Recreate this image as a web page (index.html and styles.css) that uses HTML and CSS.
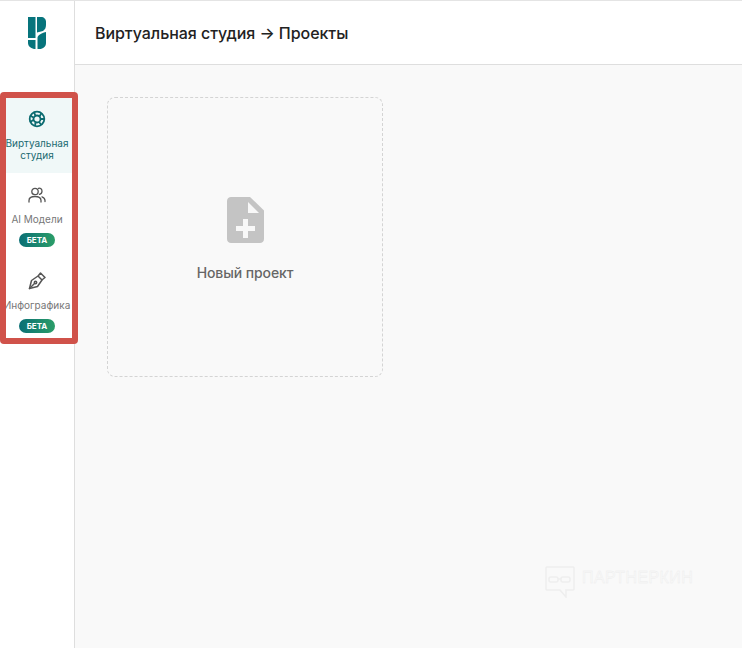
FILE: index.html
```html
<!DOCTYPE html>
<html lang="ru">
<head>
  <meta charset="UTF-8" />
  <title>Виртуальная студия</title>
  <link rel="stylesheet" href="styles.css">
</head>
<body>
  <div class="app">
    <aside class="sidebar">
      <div class="logo">
        <svg width="18" height="32" viewBox="0 0 18 32">
          <path fill="#07747c" d="M0 0H7.500V21H0Z"/>
          <path fill="#07747c" d="M9 0H13C16 0 18 2 18 5V8C18 10.500 17 12.500 15 14L9 15.500Z"/>
          <path fill="#07747c" d="M9.500 32V21C9.500 18.500 12 16.500 18 15V26C18 29.500 15 32 11.500 32Z"/>
          <path fill="#07747c" d="M0 23H7.500V32C3.500 32 0 29.500 0 26Z"/>
        </svg>
      </div>
      <nav class="menu">
        <a class="menu-item active">
          <svg class="menu-icon" width="18" height="18" viewBox="0 0 18 18" fill="none" stroke="#0b6b70" stroke-width="1.800">
            <circle cx="9" cy="9" r="7.300"/>
            <circle cx="9" cy="9" r="3.500"/>
            <path d="M6 2 7.500 6M13.500 3 11.500 6.500M16.500 9H12.500M13.500 15 11 12M7 16 7.500 12.500M2 12 5.500 10M2 5.500 5.500 7.500"/>
          </svg>
          <span class="menu-label">Виртуальная студия</span>
        </a>
        <a class="menu-item models">
          <svg class="menu-icon" width="18" height="18" viewBox="0 0 18 18" fill="none" stroke="#555" stroke-width="1.300" stroke-linecap="round">
            <circle cx="7" cy="5.500" r="3.200"/>
            <path d="M1 16V14.500C1 12 3.500 10.500 7 10.500S13 12 13 14.500V16"/>
            <path d="M10.500 2.300C12.500 1.800 14 3.300 14 5.200S12.800 8 11.500 8.300"/>
            <path d="M14 10.800C16 11.500 17 12.800 17 14.500V15.500"/>
          </svg>
          <span class="menu-label">AI Модели</span>
          <span class="badge">БЕТА</span>
        </a>
        <a class="menu-item infographic">
          <svg class="menu-icon" width="18" height="18" viewBox="0 0 18 18" fill="none" stroke="#555" stroke-width="1.500" stroke-linejoin="round" stroke-linecap="round">
            <path d="M3.500 8.500 10 4 14 8 9.500 14.500 1.500 16.500Z"/>
            <path d="M10.500 3.500 12.500 1 17 5.500 14.500 7.500"/>
            <path d="M1.500 16.500 6.500 11.500"/>
            <circle cx="7.500" cy="10.500" r="1.200"/>
          </svg>
          <span class="menu-label">Инфографика</span>
          <span class="badge">БЕТА</span>
        </a>
      </nav>
    </aside>
    <div class="content">
      <header class="topbar">
        <h1 class="title">Виртуальная студия → Проекты</h1>
      </header>
      <main class="projects">
        <div class="new-card">
          <svg width="37" height="46" viewBox="0 0 37 46">
            <path fill="#c4c4c4" d="M4 0H23L37 13.500V42C37 44.500 35 46 33 46H4C2 46 0 44.500 0 42V4C0 1.500 2 0 4 0Z"/>
            <path fill="#f8f8f8" d="M21 5 32 16H21Z"/>
            <path fill="#f8f8f8" d="M16 22H21V29H28V34H21V41H16V34H9V29H16Z"/>
          </svg>
          <span class="new-label">Новый проект</span>
        </div>
      </main>
    </div>
  </div>

  <div class="watermark">
    <svg width="30" height="32" viewBox="0 0 30 32" fill="none" stroke="#eeeeee" stroke-width="1.500">
      <path d="M2 1H28C28.500 1 29 1.500 29 2V23C29 23.500 28.500 24 28 24H21V31L15 24H2C1.500 24 1 23.500 1 23V2C1 1.500 1.500 1 2 1Z"/>
      <rect x="4" y="11" width="9" height="5" rx="2"/>
      <rect x="16" y="11" width="9" height="5" rx="2"/>
      <path d="M13 13H16"/>
    </svg>
    <span class="watermark-text">ПАРТНЕРКИН</span>
  </div>

  <div class="highlight"></div>
</body>
</html>
```

FILE: styles.css
```css
* {
  box-sizing: border-box;
}
body {
  margin: 0;
  height: 648px;
  overflow: hidden;
  background-color: #fff;
  font-family: Inter, "Liberation Sans", sans-serif;
}
.app {
  display: flex;
  height: 648px;
  border-top: 1px solid #e4e4e4;
}
.sidebar {
  width: 75px;
  flex-shrink: 0;
  border-right: 1px solid #dedede;
  background-color: #fff;
}
.logo {
  display: flex;
  justify-content: center;
  padding: 16px 0 0 0;
  height: 97px;
}
.menu {
  display: flex;
  flex-direction: column;
  padding-left: 6px;
  width: 72px;
}
.menu-item {
  display: flex;
  flex-direction: column;
  align-items: center;
  padding: 12px 4px 11px 0;
  text-align: center;
}
.menu-item.active {
  background-color: #f0f8f8;
  height: 75px;
}
.menu-item.models {
  height: 85px;
  padding-top: 13px;
}
.menu-item.infographic {
  padding-top: 14px;
}
.menu-icon {
  display: block;
  flex-shrink: 0;
  margin-bottom: 9px;
}
.menu-label {
  flex-shrink: 0;
  width: 70px;
  font-size: 10px;
  line-height: 12px;
  color: #777;
}
.active .menu-label {
  color: #1a6a70;
}
.badge {
  flex-shrink: 0;
  margin-top: 8px;
  width: 36px;
  height: 14px;
  border-radius: 7px;
  background: linear-gradient(90deg, #0a6f75, #2b9d68);
  color: #fff;
  font-size: 8px;
  font-weight: 700;
  line-height: 14px;
}
.content {
  flex: 1;
  display: flex;
  flex-direction: column;
  min-width: 0;
}
.topbar {
  height: 64px;
  padding-left: 20px;
  display: flex;
  align-items: center;
  border-bottom: 1px solid #dedede;
}
.title {
  margin: 0;
  font-size: 16px;
  font-weight: 500;
  letter-spacing: -0.05px;
  color: #222;
}
.projects {
  flex: 1;
  background-color: #f9f9f9;
  padding: 32px;
}
.new-card {
  width: 276px;
  height: 280px;
  border: 1px dashed #d4d4d4;
  border-radius: 8px;
  display: flex;
  flex-direction: column;
  align-items: center;
  padding-top: 99px;
}
.new-label {
  margin-top: 21px;
  font-size: 14px;
  font-weight: 500;
  line-height: 17px;
  letter-spacing: -0.1px;
  color: #666;
}
.watermark {
  position: absolute;
  left: 545px;
  top: 566px;
  display: flex;
  align-items: center;
  gap: 7px;
}
.watermark-text {
  font-family: "Liberation Sans", sans-serif;
  font-size: 16px;
  letter-spacing: 0.4px;
  color: #f9f9f9;
  -webkit-text-stroke: 0.4px #ececec;
  margin-top: -8px;
}
.highlight {
  position: absolute;
  left: 0;
  top: 92px;
  width: 78px;
  height: 252px;
  border: 6px solid #d0524a;
  border-radius: 4px;
}
```
